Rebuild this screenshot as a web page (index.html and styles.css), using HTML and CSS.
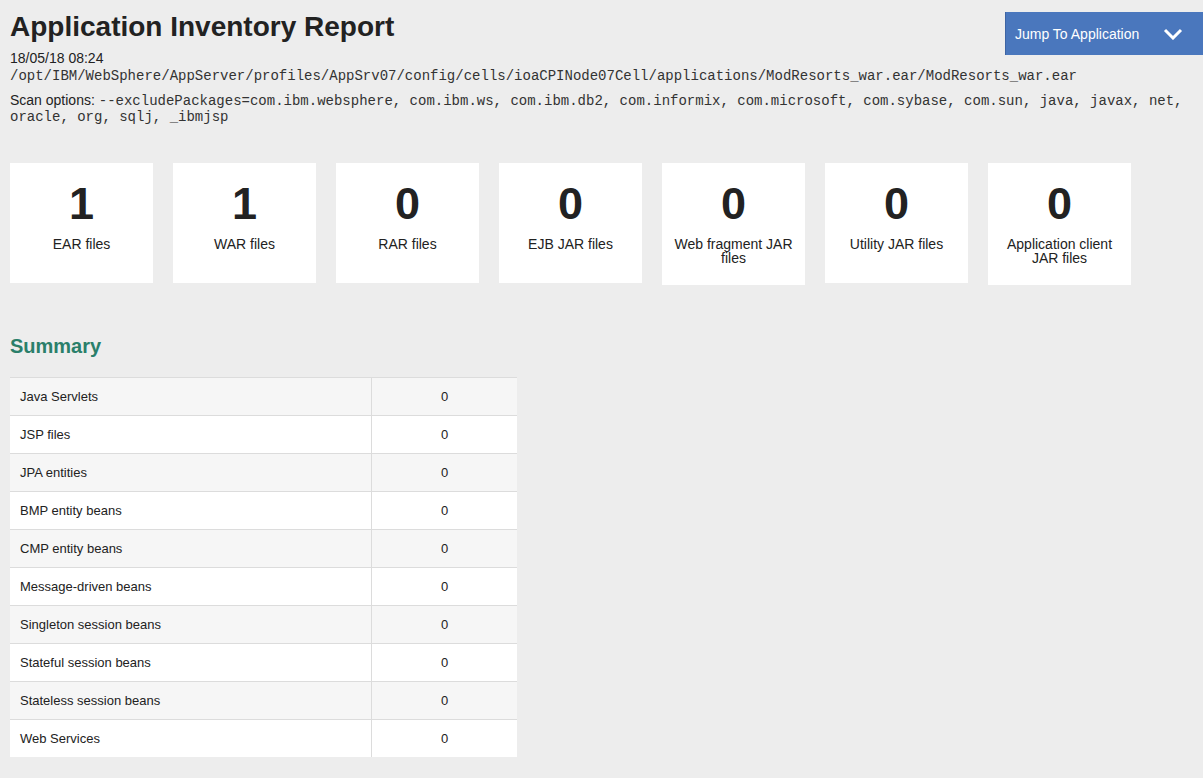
FILE: index.html
```html
<!DOCTYPE html>
<html lang="en">
<head>
<meta charset="utf-8">
<title>Application Inventory Report</title>
<link rel="stylesheet" href="styles.css">
</head>
<body>
<div class="page">
  <header class="header">
    <div class="header-info">
      <h1 class="title">Application Inventory Report</h1>
      <div class="date">18/05/18 08:24</div>
      <div class="path">/opt/IBM/WebSphere/AppServer/profiles/AppSrv07/config/cells/ioaCPINode07Cell/applications/ModResorts_war.ear/ModResorts_war.ear</div>
      <div class="options">Scan options: <span class="mono">--excludePackages=com.ibm.websphere, com.ibm.ws, com.ibm.db2, com.informix, com.microsoft, com.sybase, com.sun, java, javax, net, oracle, org, sqlj, _ibmjsp</span></div>
    </div>
    <button class="jump" type="button">
      <span>Jump To Application</span>
      <svg class="chev" width="20" height="12" viewBox="0 0 20 12"><path d="M2 2 L10 10 L18 2" fill="none" stroke="#fff" stroke-width="3"/></svg>
    </button>
  </header>

  <section class="stats">
    <div class="card"><div class="num">1</div><div class="label">EAR files</div></div>
    <div class="card"><div class="num">1</div><div class="label">WAR files</div></div>
    <div class="card"><div class="num">0</div><div class="label">RAR files</div></div>
    <div class="card"><div class="num">0</div><div class="label">EJB JAR files</div></div>
    <div class="card"><div class="num">0</div><div class="label">Web fragment JAR files</div></div>
    <div class="card"><div class="num">0</div><div class="label">Utility JAR files</div></div>
    <div class="card"><div class="num">0</div><div class="label">Application client JAR files</div></div>
  </section>

  <h2 class="summary-title">Summary</h2>
  <table class="summary">
    <tbody>
      <tr><td>Java Servlets</td><td>0</td></tr>
      <tr><td>JSP files</td><td>0</td></tr>
      <tr><td>JPA entities</td><td>0</td></tr>
      <tr><td>BMP entity beans</td><td>0</td></tr>
      <tr><td>CMP entity beans</td><td>0</td></tr>
      <tr><td>Message-driven beans</td><td>0</td></tr>
      <tr><td>Singleton session beans</td><td>0</td></tr>
      <tr><td>Stateful session beans</td><td>0</td></tr>
      <tr><td>Stateless session beans</td><td>0</td></tr>
      <tr><td>Web Services</td><td>0</td></tr>
    </tbody>
  </table>
</div>
</body>
</html>
```

FILE: styles.css
```css
html, body {
  margin: 0;
  padding: 0;
  background: #ededed;
  color: #222;
  font-family: "Liberation Sans", Arial, sans-serif;
}

.page {
  padding: 0 10px 20px 10px;
}

.header {
  display: flex;
  justify-content: space-between;
  align-items: flex-start;
}

.header-info {
  flex: 1;
  min-width: 0;
}

.title {
  margin: 0;
  padding-top: 11px;
  font-size: 28px;
  line-height: 32px;
  font-weight: bold;
  color: #222;
}

.date {
  margin-top: 7px;
  font-size: 14px;
  line-height: 16px;
}

.path {
  margin-top: 2px;
  font-family: "Liberation Mono", "Courier New", monospace;
  font-size: 14px;
  line-height: 17px;
  color: #333;
}

.options {
  margin-top: 8px;
  font-size: 14px;
  line-height: 15px;
}

.mono {
  font-family: "Liberation Mono", "Courier New", monospace;
  font-size: 14px;
  line-height: 15px;
  color: #333;
}

.jump {
  position: absolute;
  top: 12px;
  right: 0;
  width: 198px;
  height: 43px;
  display: flex;
  align-items: center;
  justify-content: space-between;
  padding: 0 20px 0 9px;
  background: #4a77bd;
  border: none;
  border-left: 1px solid #3d64a3;
  color: #fff;
  font-family: "Liberation Sans", Arial, sans-serif;
  font-size: 14px;
  box-sizing: border-box;
}

.chev {
  display: block;
}

.stats {
  display: flex;
  align-items: flex-start;
  gap: 20px;
  margin-top: 38px;
}

.card {
  width: 143px;
  min-height: 120px;
  box-sizing: border-box;
  background: #fff;
  padding: 15px 8px 20px;
  text-align: center;
}

.num {
  font-size: 45px;
  line-height: 52px;
  font-weight: bold;
  color: #222;
}

.label {
  margin-top: 7px;
  font-size: 14px;
  line-height: 14px;
}

.summary-title {
  margin: 49px 0 0;
  font-size: 20px;
  line-height: 24px;
  font-weight: bold;
  color: #2a7f6a;
}

.summary {
  margin-top: 19px;
  width: 507px;
  border-collapse: collapse;
  font-size: 13px;
}

.summary td {
  border-top: 1px solid #dcdcdc;
  padding: 0 10px;
  height: 37px;
  line-height: 15px;
  background: #fff;
}

.summary tr:nth-child(odd) td {
  background: #f6f6f6;
}

.summary td:first-child {
  width: 341px;
  border-right: 1px solid #dcdcdc;
}

.summary td:last-child {
  text-align: center;
}
```
